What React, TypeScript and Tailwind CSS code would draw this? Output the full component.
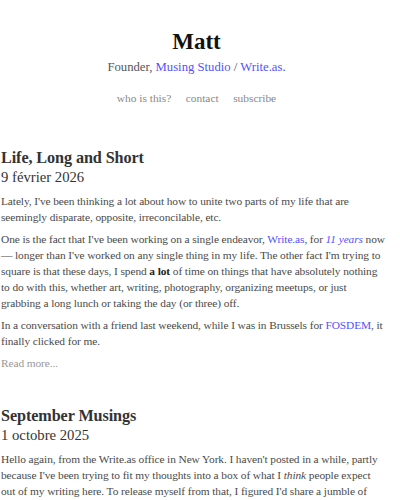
const serif = { fontFamily: '"Liberation Serif", "DejaVu Serif", serif' }

function Post({ title, date, children }: { title: string; date: string; children: React.ReactNode }) {
    return (
        <article className="mb-[35px]">
            <h2 className="text-[16.2px] font-bold leading-[20px] tracking-[-0.1px] text-[#333]">{title}</h2>
            <time className="block text-[14.7px] leading-[18px] text-[#333]">{date}</time>
            <div className="mt-[7px] text-[11.4px] leading-[16px] tracking-[-0.1px] text-[#4a4a4a] whitespace-nowrap space-y-[6px]">
                {children}
            </div>
        </article>
    )
}

const link = 'text-[#5252ff]'

export default function App() {
    return (
        <div className="min-h-[500px] bg-white overflow-hidden" style={serif}>
            <header className="pt-[28px] pr-[7px] text-center">
                <h1 className="text-[23px] font-bold leading-[28px] text-[#111]">Matt</h1>
                <p className="mt-[2px] text-[12.7px] leading-[18px] text-[#555]">
                    Founder, <a className={link}>Musing Studio</a> / <a className={link}>Write.as</a>.
                </p>
                <nav className="mt-[14px] flex justify-center gap-[14.5px] text-[11.4px] leading-[16px] text-[#888]">
                    <a>who is this?</a>
                    <a>contact</a>
                    <a>subscribe</a>
                </nav>
            </header>

            <main className="mt-[42px] pl-[1px]">
                <Post title="Life, Long and Short" date="9 février 2026">
                    <p>
                        Lately, I've been thinking a lot about how to unite two parts of my life that are<br />
                        seemingly disparate, opposite, irreconcilable, etc.
                    </p>
                    <p>
                        One is the fact that I've been working on a single endeavor, <a className={link}>Write.as</a>, for{' '}
                        <a className={`${link} italic`}>11 years</a> now<br />
                        — longer than I've worked on any single thing in my life. The other fact I'm trying to<br />
                        square is that these days, I spend <strong className="font-bold text-[#222]">a lot</strong> of time on things that have absolutely nothing<br />
                        to do with this, whether art, writing, photography, organizing meetups, or just<br />
                        grabbing a long lunch or taking the day (or three) off.
                    </p>
                    <p>
                        In a conversation with a friend last weekend, while I was in Brussels for <a className={link}>FOSDEM</a>, it<br />
                        finally clicked for me.
                    </p>
                    <p className="text-[#999]">Read more...</p>
                </Post>

                <Post title="September Musings" date="1 octobre 2025">
                    <p>
                        Hello again, from the Write.as office in New York. I haven't posted in a while, partly<br />
                        because I've been trying to fit my thoughts into a box of what I <em>think</em> people expect<br />
                        out of my writing here. To release myself from that, I figured I'd share a jumble of<br />
                        thoughts from the past month.
                    </p>
                </Post>
            </main>
        </div>
    )
}
